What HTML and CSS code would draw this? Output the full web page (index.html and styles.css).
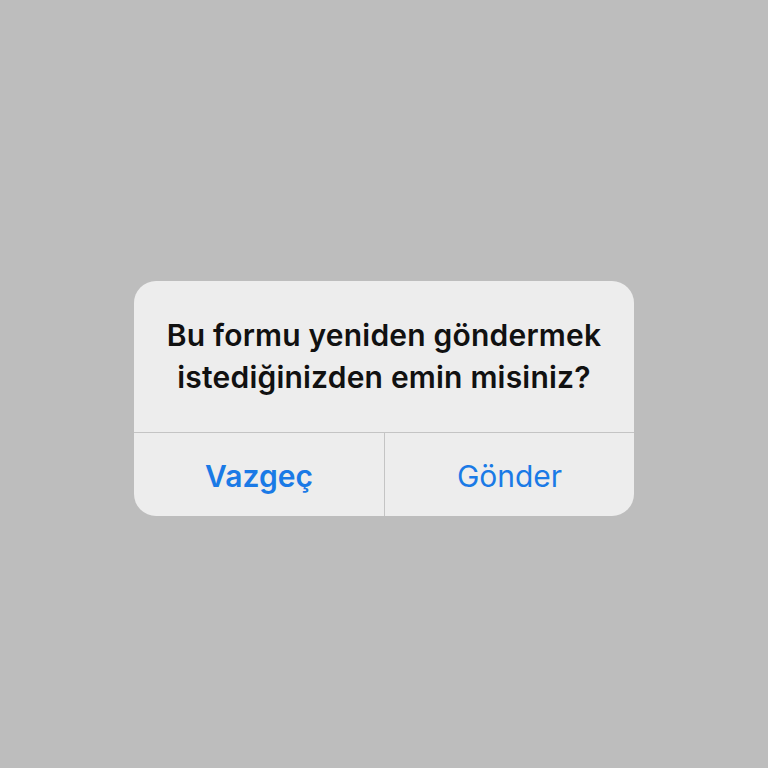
FILE: index.html
```html
<!DOCTYPE html>
<html lang="tr">

<head>
    <meta charset="UTF-8">
    <meta name="viewport" content="width=device-width, initial-scale=1.0">
    <title>Formu yeniden gönder</title>
    <link rel="stylesheet" href="styles.css">
</head>

<body>
    <div class="screen">
        <div class="alert">
            <div class="alert-message">
                Bu formu yeniden göndermek<br>
                istediğinizden emin misiniz?
            </div>
            <div class="alert-actions">
                <button class="action action-cancel">Vazgeç</button>
                <button class="action action-send">Gönder</button>
            </div>
        </div>
    </div>
</body>

</html>
```

FILE: styles.css
```css
body {
    margin: 0;
    background: #bdbdbd;
    font-family: 'Inter', 'Roboto', sans-serif;
}

.screen {
    width: 768px;
    height: 768px;
    display: flex;
    justify-content: center;
    align-items: flex-start;
}

.alert {
    margin-top: 281px;
    width: 500px;
    background: #ededed;
    border-radius: 22px;
    overflow: hidden;
}

.alert-message {
    height: 152px;
    box-sizing: border-box;
    padding-top: 33px;
    text-align: center;
    font-size: 30px;
    font-weight: 600;
    letter-spacing: 0.2px;
    line-height: 42px;
    color: #111;
    border-bottom: 1px solid #c4c4c4;
}

.alert-actions {
    display: grid;
    grid-template-columns: 1fr 1fr;
    height: 83px;
}

.action {
    border: none;
    background: none;
    font-family: inherit;
    font-size: 30px;
    color: #1a7ae6;
    padding: 2px 0 0;
}

.action-cancel {
    font-weight: 600;
}

.action-send {
    border-left: 1px solid #c4c4c4;
}
```
